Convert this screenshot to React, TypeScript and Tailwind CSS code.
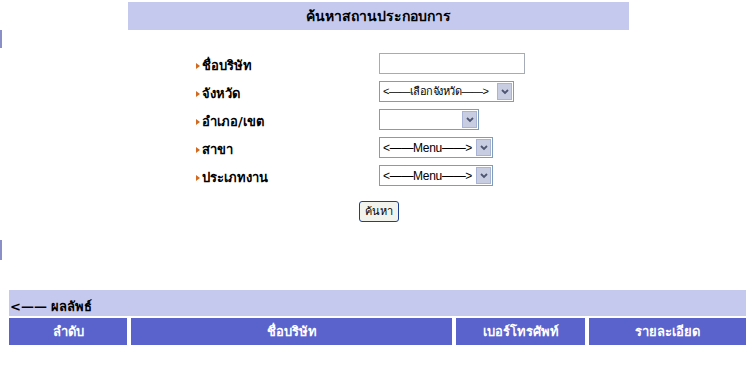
import React from 'react';

const thai = { fontFamily: 'Tahoma, "DejaVu Sans", "Noto Sans", sans-serif' };
const sel = { fontFamily: '"Liberation Sans", "DejaVu Sans", sans-serif' };

function Bullet() {
  return <span className="mr-[2px] inline-block h-0 w-0 border-y-[3px] border-l-[4px] border-y-transparent border-l-[#d2691e]" />;
}

function Select({ width, text, small }: { width: number; text?: string; small?: boolean }) {
  return (
    <div className="flex h-[21px] items-stretch border border-[#7f9db9] bg-white" style={{ width }}>
      <div
        className={
          small
            ? 'flex flex-1 items-center overflow-hidden whitespace-nowrap pl-[3px] text-[11px] leading-none tracking-[-0.5px] text-black'
            : 'flex flex-1 items-center overflow-hidden whitespace-nowrap pl-[3px] text-[12px] leading-none tracking-[-0.3px] text-black'
        }
        style={sel}
      >
        {text}
      </div>
      <div className="m-[1px] flex w-[15px] items-center justify-center border border-[#a9b3d6] bg-[#c9cde2]">
        <svg width="8" height="6" viewBox="0 0 8 6">
          <path d="M1 1 L4 4 L7 1" stroke="#4d5670" strokeWidth="1.8" fill="none" />
        </svg>
      </div>
    </div>
  );
}

const rows: { label: string; field: React.ReactNode }[] = [
  { label: 'ชื่อบริษัท', field: <div className="h-[21px] w-[146px] border border-[#a5acb5] bg-white" /> },
  { label: 'จังหวัด', field: <Select width={135} text="<——เลือกจังหวัด——>" small /> },
  { label: 'อำเภอ/เขต', field: <Select width={100} /> },
  { label: 'สาขา', field: <Select width={114} text="<——Menu——>" /> },
  { label: 'ประเภทงาน', field: <Select width={114} text="<——Menu——>" /> },
];

export default function App() {
  return (
    <div className="relative min-h-[391px] w-[756px] bg-white pt-[2px]" style={thai}>
      <div className="absolute left-0 top-[30px] h-[18px] w-[2px] bg-[#8a8fc8]" />
      <div className="absolute left-0 top-[240px] h-[20px] w-[2px] bg-[#8a8fc8]" />

      <div className="mx-auto flex h-[28px] w-[501px] items-center justify-center bg-[#c6c9ee] text-[14px] font-bold text-black">
        ค้นหาสถานประกอบการ
      </div>

      <div className="mt-[23px] flex flex-col gap-[7px]">
        {rows.map((r) => (
          <div key={r.label} className="flex h-[21px] items-center">
            <div className="flex w-[379px] items-center pl-[196px] pt-[4px] text-[13px] font-bold text-black">
              <Bullet />
              {r.label}
            </div>
            {r.field}
          </div>
        ))}
      </div>

      <div className="mt-[15px] flex justify-center pl-[1px]">
        <button className="h-[21px] rounded-[3px] border border-[#1c3f94] bg-[#f3f3ee] px-[5px] text-[11px] leading-none text-black" style={thai}>
          ค้นหา
        </button>
      </div>

      <div className="ml-[9px] mt-[68px] w-[737px]">
        <div className="flex h-[26px] items-end bg-[#c6c9ee] pb-[3px] text-[13px] font-bold leading-none text-black">
          <span className="pl-[1px]">&lt;—— ผลลัพธ์</span>
        </div>
        <div className="mt-[2px] flex h-[27px] gap-[4px] text-[13px] font-bold text-white">
          <div className="flex w-[118px] items-center justify-center bg-[#5a62cc]">ลำดับ</div>
          <div className="flex w-[321px] items-center justify-center bg-[#5a62cc]">ชื่อบริษัท</div>
          <div className="flex w-[129px] items-center justify-center bg-[#5a62cc]">เบอร์โทรศัพท์</div>
          <div className="flex flex-1 items-center justify-center bg-[#5a62cc]">รายละเอียด</div>
        </div>
      </div>
    </div>
  );
}
